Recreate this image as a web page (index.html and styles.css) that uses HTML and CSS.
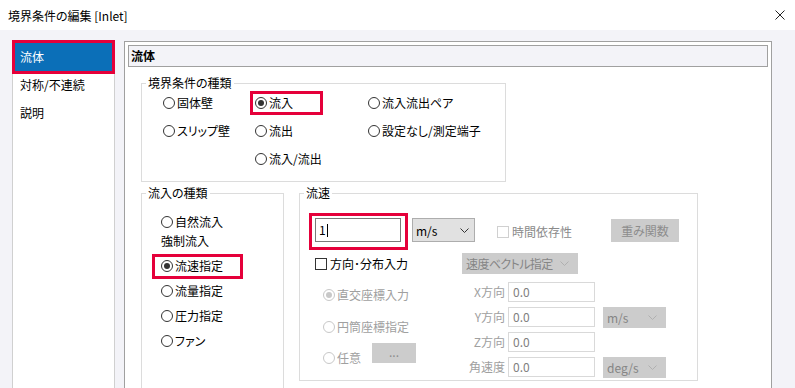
FILE: index.html
```html
<!DOCTYPE html>
<html lang="ja">
<head>
    <meta charset="UTF-8">
    <title>境界条件の編集 [Inlet]</title>
    <link rel="stylesheet" href="styles.css">
</head>
<body>
    <div class="titlebar">
        <span class="title">境界条件の編集 [Inlet]</span>
        <svg class="close" width="10" height="10" viewBox="0 0 10 10"><path d="M0.5 0.5L9.5 9.5M9.5 0.5L0.5 9.5"/></svg>
    </div>

    <div class="window">
        <ul class="nav">
            <li class="nav-item selected hl hl-nav">流体</li>
            <li class="nav-item">対称/不連続</li>
            <li class="nav-item">説明</li>
        </ul>

        <div class="panel">
            <div class="panel-head">流体</div>
            <div class="panel-body">
                <fieldset class="group group-type">
                    <legend>境界条件の種類</legend>
                    <div class="type-grid">
                        <div class="radio"><span class="dot"></span>固体壁</div>
                        <div class="radio on hl hl-inflow"><span class="dot"></span>流入</div>
                        <div class="radio"><span class="dot"></span>流入流出ペア</div>
                        <div class="radio"><span class="dot"></span>スリップ壁</div>
                        <div class="radio"><span class="dot"></span>流出</div>
                        <div class="radio"><span class="dot"></span>設定なし/測定端子</div>
                        <div></div>
                        <div class="radio"><span class="dot"></span>流入/流出</div>
                    </div>
                </fieldset>

                <div class="lower">
                    <fieldset class="group group-inflow">
                        <legend>流入の種類</legend>
                        <div class="inflow-list">
                            <div class="radio"><span class="dot"></span>自然流入</div>
                            <div class="sub">強制流入</div>
                            <div class="radio on hl hl-speed"><span class="dot"></span>流速指定</div>
                            <div class="radio"><span class="dot"></span>流量指定</div>
                            <div class="radio"><span class="dot"></span>圧力指定</div>
                            <div class="radio"><span class="dot"></span>ファン</div>
                        </div>
                    </fieldset>

                    <fieldset class="group group-speed">
                        <legend>流速</legend>
                        <div class="speed-body">
                            <div class="row-a">
                                <div class="textbox hl hl-value">1<span class="caret"></span></div>
                                <div class="combo">m/s<svg width="9" height="5" viewBox="0 0 9 5"><path d="M0.5 0.5L4.5 4.5L8.5 0.5"/></svg></div>
                                <div class="check disabled"><span class="box"></span>時間依存性</div>
                                <div class="button disabled btn-weight">重み関数</div>
                            </div>
                            <div class="row-b">
                                <div class="check"><span class="box"></span>方向･分布入力</div>
                                <div class="combo disabled combo-wide"><span class="tight">速度ベクトル指定</span><svg width="9" height="5" viewBox="0 0 9 5"><path d="M0.5 0.5L4.5 4.5L8.5 0.5"/></svg></div>
                            </div>
                            <div class="coords">
                                <div class="coord-modes">
                                    <div class="radio disabled on"><span class="dot"></span>直交座標入力</div>
                                    <div class="radio disabled mode-cyl"><span class="dot"></span>円筒座標指定</div>
                                    <div class="mode-any">
                                        <div class="radio disabled"><span class="dot"></span>任意</div>
                                        <div class="button disabled btn-more">...</div>
                                    </div>
                                </div>
                                <div class="coord-grid">
                                    <span class="lbl">X方向</span>
                                    <div class="field">0.0</div>
                                    <span></span>
                                    <span class="lbl">Y方向</span>
                                    <div class="field">0.0</div>
                                    <div class="combo disabled combo-unit">m/s<svg width="9" height="5" viewBox="0 0 9 5"><path d="M0.5 0.5L4.5 4.5L8.5 0.5"/></svg></div>
                                    <span class="lbl">Z方向</span>
                                    <div class="field">0.0</div>
                                    <span></span>
                                    <span class="lbl">角速度</span>
                                    <div class="field">0.0</div>
                                    <div class="combo disabled combo-unit">deg/s<svg width="9" height="5" viewBox="0 0 9 5"><path d="M0.5 0.5L4.5 4.5L8.5 0.5"/></svg></div>
                                </div>
                            </div>
                        </div>
                    </fieldset>
                </div>
            </div>
        </div>
    </div>
</body>
</html>
```

FILE: styles.css
```css
html, body {
    margin: 0;
    height: 100%;
    overflow: hidden;
}
body {
    font-family: "Noto Sans CJK JP", "Noto Sans", sans-serif;
    font-size: 12px;
    font-feature-settings: "palt";
    color: #000;
    background-color: #f3f3f8;
}
.titlebar {
    height: 30px;
    background-color: #fff;
    display: flex;
    align-items: center;
    justify-content: space-between;
    padding: 0 10px 0 8px;
}
.close {
    stroke: #222;
    stroke-width: 1;
    fill: none;
}
.window {
    display: flex;
    align-items: flex-start;
    padding: 10px 0 0 12px;
}

/* left list */
.nav {
    list-style: none;
    margin: 0;
    padding: 2px;
    width: 103px;
    height: 360px;
    box-sizing: border-box;
    background-color: #fff;
    border: 1px solid #d0d0d0;
}
.nav-item {
    height: 28px;
    line-height: 28px;
    padding-left: 5px;
}
.nav-item.selected {
    background-color: #0b6fb8;
    color: #fff;
}

/* red annotation boxes */
.hl { position: relative; }
.hl::after {
    content: '';
    position: absolute;
    border: 3px solid #e5003a;
    box-sizing: border-box;
}
.hl-nav::after { left: -3px; top: -3px; right: -3px; bottom: -3px; }
.hl-inflow::after { left: -5px; top: -5px; width: 73px; height: 24px; }
.hl-speed::after { left: -9px; top: -5px; width: 91px; height: 25px; }
.hl-value::after { left: -7px; top: -6px; width: 99px; height: 37px; }

/* main panel */
.panel {
    margin: 1px 0 0 9px;
    width: 648px;
    height: 360px;
    box-sizing: border-box;
    border: 1px solid #a0a0a0;
    background-color: #fff;
    padding: 3px;
}
.panel-head {
    height: 22px;
    box-sizing: border-box;
    border: 1px solid #a0a0a0;
    background-color: #f3f3f8;
    font-weight: bold;
    line-height: 20px;
    padding-left: 2px;
}
.panel-body {
    padding: 8px 0 0 13px;
}

/* group boxes */
.group {
    margin: 0;
    padding: 0;
    border: 1px solid #dcdcdc;
    box-sizing: border-box;
    min-width: 0;
}
.group legend {
    padding: 0 2px;
    margin-left: 4px;
    line-height: 16px;
}
.group-type {
    width: 365px;
    padding-bottom: 15px;
}
.type-grid {
    display: grid;
    grid-template-columns: 92px 113px auto;
    grid-auto-rows: 14px;
    row-gap: 14px;
    padding: 5px 0 0 21px;
}
.lower {
    display: flex;
    gap: 15px;
    margin-top: 3px;
}
.group-inflow {
    width: 143px;
    height: 220px;
}
.inflow-list {
    display: flex;
    flex-direction: column;
    align-items: flex-start;
    gap: 11px;
    padding: 14px 0 0 19px;
}
.inflow-list .sub {
    line-height: 14px;
    margin-top: -6px;
}
.group-speed {
    width: 399px;
    height: 196px;
}
.speed-body {
    padding: 17px 18px 0 15px;
}

/* controls */
.radio {
    display: flex;
    align-items: center;
    gap: 2px;
    height: 14px;
    line-height: 14px;
    white-space: nowrap;
}
.dot {
    width: 12px;
    height: 12px;
    box-sizing: border-box;
    border: 1px solid #333;
    border-radius: 50%;
    display: flex;
    align-items: center;
    justify-content: center;
    flex: none;
}
.radio.on .dot::after {
    content: '';
    width: 6px;
    height: 6px;
    border-radius: 50%;
    background-color: #333;
}
.radio.disabled { color: #a0a0a0; }
.radio.disabled .dot { border-color: #c8c8c8; }
.radio.disabled.on .dot::after { background-color: #c8c8c8; }

.check {
    display: flex;
    align-items: center;
    gap: 3px;
    line-height: 14px;
    white-space: nowrap;
}
.box {
    width: 12px;
    height: 12px;
    box-sizing: border-box;
    border: 1px solid #333;
    background-color: #fff;
}
.check.disabled { color: #8a8a8a; }
.check.disabled .box { border-color: #d0d0d0; }

.textbox {
    width: 86px;
    height: 24px;
    box-sizing: border-box;
    border: 1px solid #7a7a7a;
    padding-left: 3px;
    line-height: 22px;
    display: flex;
    align-items: center;
}
.caret {
    width: 1px;
    height: 13px;
    background-color: #000;
    margin-left: 1px;
}
.combo {
    display: flex;
    align-items: center;
    justify-content: space-between;
    box-sizing: border-box;
    width: 63px;
    height: 24px;
    padding: 0 5px 0 3px;
    background-color: #e1e1e1;
    border: 1px solid #adadad;
    white-space: nowrap;
}
.combo svg {
    fill: none;
    stroke: #333;
    stroke-width: 1;
    flex: none;
}
.combo.disabled {
    background-color: #cccccc;
    border-color: #cccccc;
    color: #858585;
}
.combo.disabled svg { stroke: #b0b0b0; }
.tight { letter-spacing: -0.6px; }
.button {
    box-sizing: border-box;
    text-align: center;
    background-color: #e1e1e1;
    border: 1px solid #adadad;
}
.button.disabled {
    background-color: #cccccc;
    border-color: #cccccc;
    color: #8c8c8c;
}

.row-a {
    display: flex;
    align-items: flex-start;
}
.row-a .combo { margin-left: 11px; }
.row-a .check {
    margin: 7px 0 0 22px;
}
.btn-weight {
    margin: 1px 0 0 auto;
    width: 68px;
    height: 23px;
    line-height: 21px;
}
.row-b {
    display: grid;
    grid-template-columns: 147px 116px;
    align-items: center;
    height: 21px;
    margin-top: 11px;
}
.combo-wide {
    width: 116px;
    height: 21px;
    padding-right: 8px;
}
.coords {
    display: flex;
    margin: 8px 0 0 -15px;
}
.coord-modes {
    width: 160px;
    padding: 6px 0 0 23px;
    box-sizing: border-box;
}
.mode-cyl { margin-top: 18px; }
.mode-any {
    display: flex;
    align-items: flex-start;
    margin-top: 9px;
}
.mode-any .radio {
    width: 49px;
    margin-top: 8px;
}
.btn-more {
    width: 44px;
    height: 20px;
    line-height: 16px;
}
.coord-grid {
    display: grid;
    grid-template-columns: 48px 87px 71px;
    grid-auto-rows: 20px;
    row-gap: 5px;
    align-items: start;
}
.lbl {
    text-align: right;
    padding-right: 3px;
    line-height: 20px;
    color: #a0a0a0;
    white-space: nowrap;
}
.field {
    height: 20px;
    box-sizing: border-box;
    border: 1px solid #d9d9d9;
    padding-left: 4px;
    line-height: 18px;
    color: #808080;
}
.combo-unit {
    justify-self: end;
    height: 21px;
    padding-right: 8px;
}
```
